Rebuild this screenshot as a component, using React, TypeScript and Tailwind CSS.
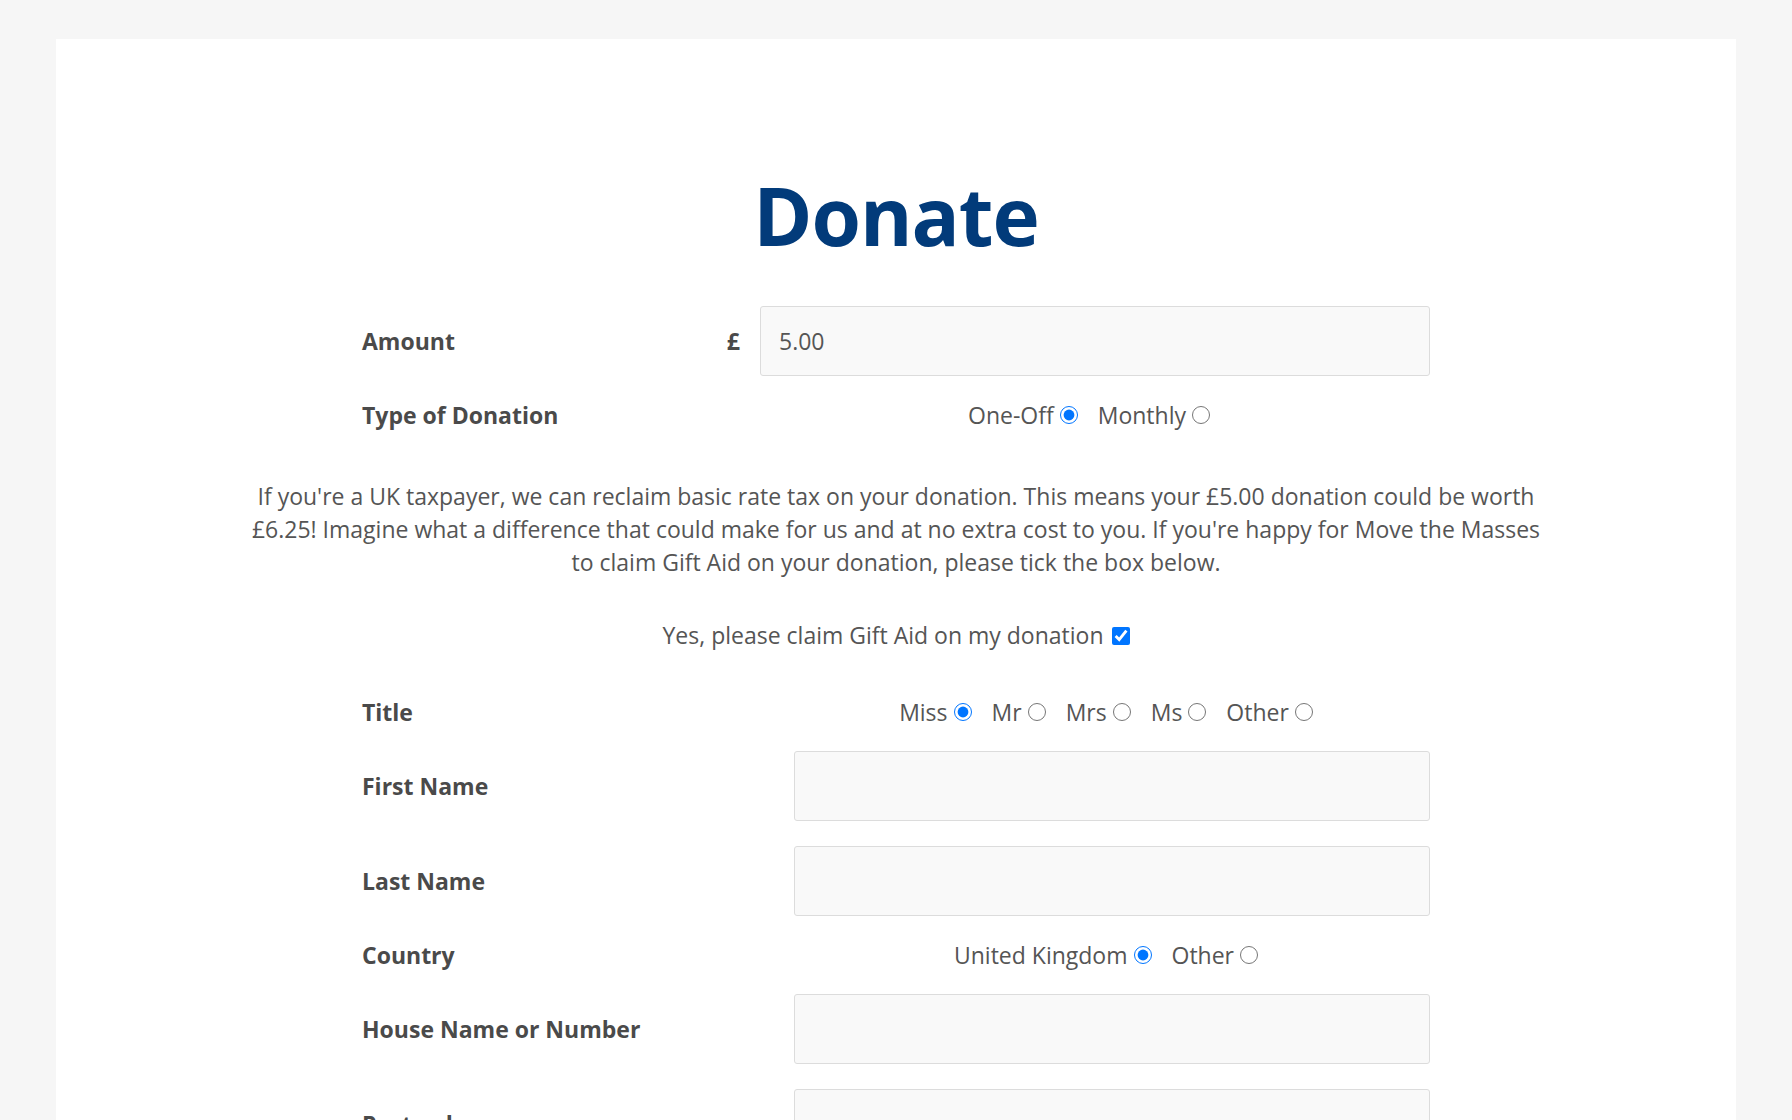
import { useState } from "react";

const inputCls =
  "h-[70px] w-full rounded-[3px] border border-[#dcdcdc] bg-[#f9f9f9] px-[18px] text-[23px] text-[#555] outline-none";

const labelCls = "font-bold leading-7 text-[#4a4a4a]";

function Radio({
  name,
  options,
  value,
  onChange,
}: {
  name: string;
  options: string[];
  value: string;
  onChange: (v: string) => void;
}) {
  return (
    <div className="flex h-7 items-center justify-center gap-2 leading-7">
      {options.map((o) => (
        <label key={o} className="flex items-center">
          {o}
          <input
            type="radio"
            name={name}
            checked={value === o}
            onChange={() => onChange(o)}
            className="ml-[6px] mr-3 h-[18px] w-[18px] accent-[#0075ff]"
          />
        </label>
      ))}
    </div>
  );
}

export default function App() {
  const [amount, setAmount] = useState("5.00");
  const [type, setType] = useState("One-Off");
  const [giftAid, setGiftAid] = useState(true);
  const [title, setTitle] = useState("Miss");
  const [country, setCountry] = useState("United Kingdom");

  return (
    <div className="min-h-screen bg-[#f6f6f6] px-14 pt-[39px] font-['Open_Sans',sans-serif] text-[23px] leading-[33px] text-[#555]">
      <div className="min-h-[1100px] bg-white pb-24 pt-[136px]">
        <h1 className="text-center text-[80px] font-bold leading-none tracking-[-1px] text-[#023b7a]">Donate</h1>

        <div className="mx-auto mt-[51px] grid w-[1068px] grid-cols-[1fr_auto_670px] items-center gap-y-[25px]">
          <span className={labelCls}>Amount</span>
          <span className={`pr-5 ${labelCls}`}>£</span>
          <input value={amount} onChange={(e) => setAmount(e.target.value)} className={inputCls} />

          <span className={labelCls}>Type of Donation</span>
          <span />
          <Radio name="type" options={["One-Off", "Monthly"]} value={type} onChange={setType} />
        </div>

        <p className="mx-auto mt-[51px] w-[1305px] text-center">
          If you're a UK taxpayer, we can reclaim basic rate tax on your donation. This means your £5.00 donation could be
          worth £6.25! Imagine what a difference that could make for us and at no extra cost to you. If you're happy for
          Move the Masses to claim Gift Aid on your donation, please tick the box below.
        </p>

        <label className="mt-10 flex items-center justify-center">
          Yes, please claim Gift Aid on my donation
          <input
            type="checkbox"
            checked={giftAid}
            onChange={(e) => setGiftAid(e.target.checked)}
            className="ml-[8px] h-[18px] w-[18px] accent-[#0075ff]"
          />
        </label>

        <div className="mx-auto mt-[46px] grid w-[1068px] grid-cols-[1fr_636px] items-center gap-y-[25px]">
          <span className={labelCls}>Title</span>
          <Radio name="title" options={["Miss", "Mr", "Mrs", "Ms", "Other"]} value={title} onChange={setTitle} />

          <span className={labelCls}>First Name</span>
          <input className={inputCls} />

          <span className={labelCls}>Last Name</span>
          <input className={inputCls} />

          <span className={labelCls}>Country</span>
          <Radio name="country" options={["United Kingdom", "Other"]} value={country} onChange={setCountry} />

          <span className={labelCls}>House Name or Number</span>
          <input className={inputCls} />

          <span className={labelCls}>Postcode</span>
          <input className={inputCls} />

          <span className={labelCls}>Email</span>
          <input className={inputCls} />
        </div>
      </div>
    </div>
  );
}
